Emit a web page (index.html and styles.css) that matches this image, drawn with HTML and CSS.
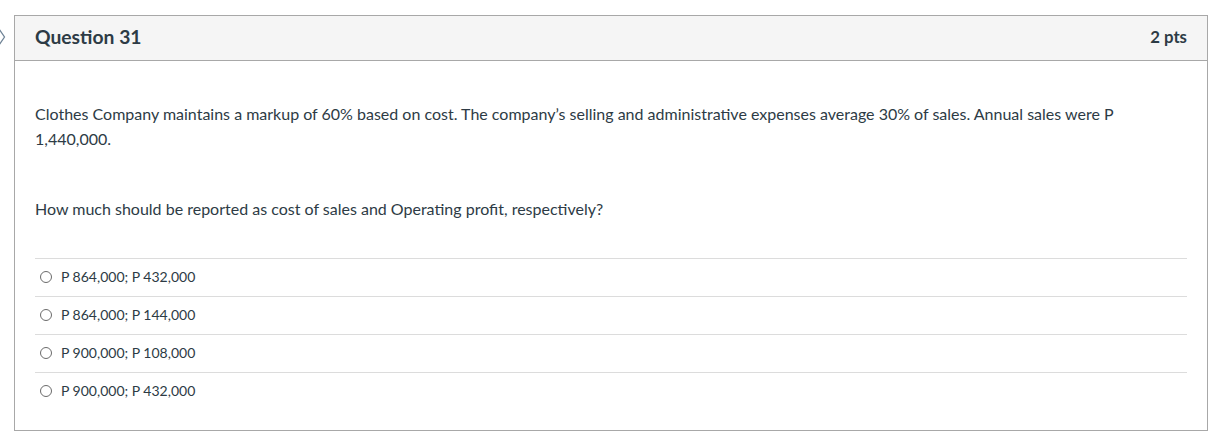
FILE: index.html
```html
<!DOCTYPE html>
<html>
<head>
<meta charset="utf-8">
<link rel="stylesheet" href="styles.css">
</head>
<body>
<div class="page">
  <div class="chevron">
    <svg width="8" height="18" viewBox="0 0 8 18"><path d="M0 1 L5.5 9 L0 17" fill="none" stroke="#6f8396" stroke-width="1.3"/></svg>
  </div>
  <div class="card">
    <div class="header">
      <span class="title">Question 31</span>
      <span class="pts">2 pts</span>
    </div>
    <div class="body">
      <p class="q">Clothes Company maintains a markup of 60% based on cost. The company’s selling and administrative expenses average 30% of sales. Annual sales were P 1,440,000.</p>
      <p class="q second">How much should be reported as cost of sales and Operating profit, respectively?</p>
      <div class="answers">
        <div class="answer"><span class="radio"></span><span>P 864,000; P 432,000</span></div>
        <div class="answer"><span class="radio"></span><span>P 864,000; P 144,000</span></div>
        <div class="answer"><span class="radio"></span><span>P 900,000; P 108,000</span></div>
        <div class="answer"><span class="radio"></span><span>P 900,000; P 432,000</span></div>
      </div>
    </div>
  </div>
</div>
</body>
</html>
```
FILE: styles.css
```css
html, body { margin: 0; padding: 0; background: #fff; }
body { font-family: Lato, "Noto Sans", sans-serif; color: #2d3b45; }
.page { position: relative; padding: 15px 0 0 14px; }
.chevron { position: absolute; left: -1px; top: 28px; }
.card { width: 1192px; border: 1px solid #a8a8a8; }
.header { height: 41px; padding: 0 20px 3px 20px; background: #f5f5f5; border-bottom: 1px solid #a8a8a8; display: flex; align-items: center; justify-content: space-between; }
.title { font-size: 19.3px; font-weight: 700; }
.pts { font-size: 16.8px; font-weight: 700; }
.body { padding: 40px 20px 20px 20px; }
.q { margin: 0; font-size: 16px; line-height: 25px; max-width: 1100px; }
.second { margin-top: 45px; margin-bottom: 37px; }
.answer { height: 35px; padding-bottom: 2px; border-top: 1px solid #dcdcdc; display: flex; align-items: center; font-size: 14px; }
.radio { width: 12px; height: 12px; border: 1px solid #6b6b6b; border-radius: 50%; margin: 0 9px 0 5px; box-sizing: border-box; }
```
